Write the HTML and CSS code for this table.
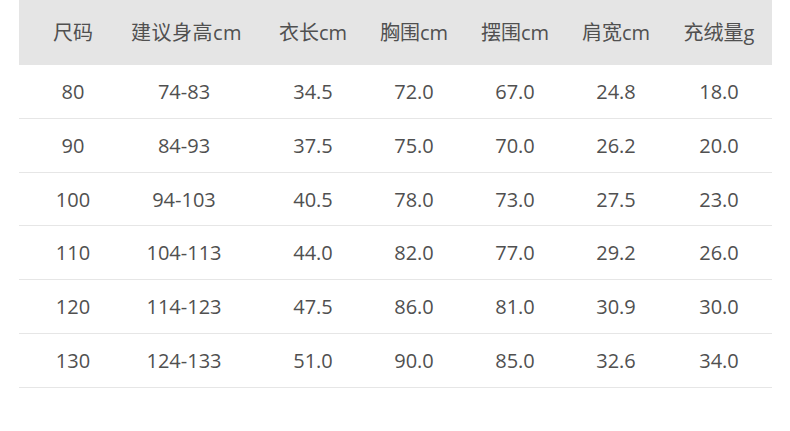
FILE: index.html
```html
<!DOCTYPE html>
<html lang="zh">
<head>
<meta charset="utf-8">
<link rel="stylesheet" href="styles.css">
</head>
<body>
<div class="table">
  <div class="row head">
    <div class="cell">尺码</div><div class="cell">建议身高cm</div><div class="cell">衣长cm</div><div class="cell">胸围cm</div><div class="cell">摆围cm</div><div class="cell">肩宽cm</div><div class="cell">充绒量g</div>
  </div>
  <div class="row">
    <div class="cell">80</div><div class="cell">74-83</div><div class="cell">34.5</div><div class="cell">72.0</div><div class="cell">67.0</div><div class="cell">24.8</div><div class="cell">18.0</div>
  </div>
  <div class="row">
    <div class="cell">90</div><div class="cell">84-93</div><div class="cell">37.5</div><div class="cell">75.0</div><div class="cell">70.0</div><div class="cell">26.2</div><div class="cell">20.0</div>
  </div>
  <div class="row r53">
    <div class="cell">100</div><div class="cell">94-103</div><div class="cell">40.5</div><div class="cell">78.0</div><div class="cell">73.0</div><div class="cell">27.5</div><div class="cell">23.0</div>
  </div>
  <div class="row">
    <div class="cell">110</div><div class="cell">104-113</div><div class="cell">44.0</div><div class="cell">82.0</div><div class="cell">77.0</div><div class="cell">29.2</div><div class="cell">26.0</div>
  </div>
  <div class="row">
    <div class="cell">120</div><div class="cell">114-123</div><div class="cell">47.5</div><div class="cell">86.0</div><div class="cell">81.0</div><div class="cell">30.9</div><div class="cell">30.0</div>
  </div>
  <div class="row">
    <div class="cell">130</div><div class="cell">124-133</div><div class="cell">51.0</div><div class="cell">90.0</div><div class="cell">85.0</div><div class="cell">32.6</div><div class="cell">34.0</div>
  </div>
</div>
</body>
</html>
```
FILE: styles.css
```css
html, body {
  margin: 0;
  padding: 0;
  background: #ffffff;
}
body {
  font-family: "Open Sans", "Noto Sans CJK SC", sans-serif;
  font-size: 20px;
  color: #505050;
}
.table {
  margin-left: 19px;
  width: 753px;
}
.row {
  display: flex;
  align-items: center;
  height: 54px;
  border-bottom: 1px solid #e6e6e6;
  box-sizing: border-box;
  padding-top: 1px;
}
.row.r53 {
  height: 53px;
}
.row.head {
  height: 65px;
  padding-top: 1px;
  background: #e5e5e5;
  border-bottom: none;
}
.cell {
  width: 100px;
  flex: none;
  text-align: center;
  white-space: nowrap;
  line-height: 1;
}
.cell:nth-child(1) { margin-left: 4px; }
.cell:nth-child(2) { margin-left: 11px; }
.cell:nth-child(3) { margin-left: 29px; }
.cell:nth-child(4) { margin-left: 1px; }
.cell:nth-child(5) { margin-left: 1px; }
.cell:nth-child(6) { margin-left: 1px; }
.cell:nth-child(7) { margin-left: 3px; }
.head .cell:nth-child(2) { letter-spacing: 0.5px; margin-left: 8px; }
.head .cell:nth-child(3) { margin-left: 32px; }
```
